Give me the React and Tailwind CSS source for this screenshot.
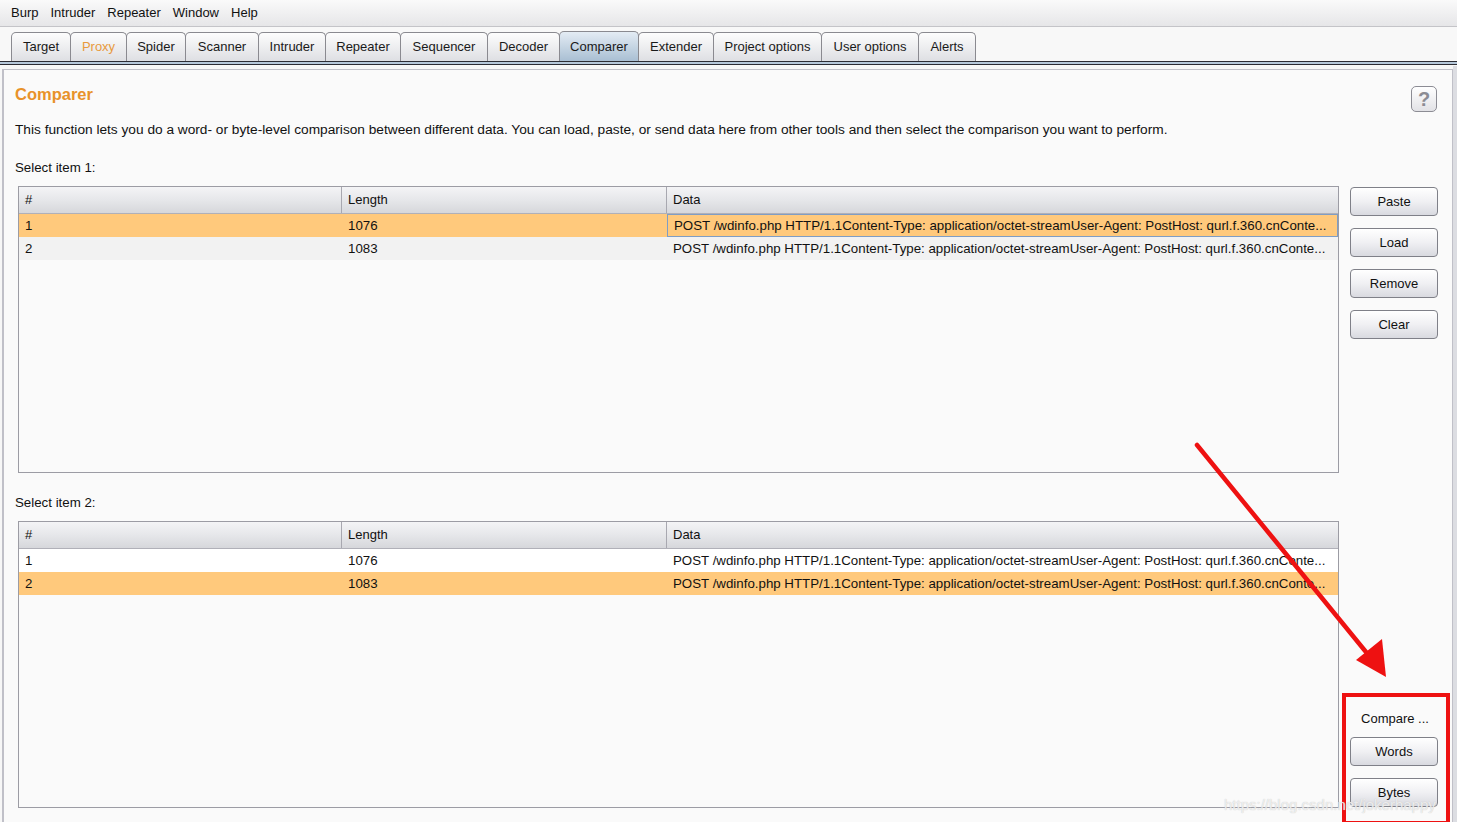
import React from 'react';

const menus = ['Burp', 'Intruder', 'Repeater', 'Window', 'Help'];

const tabs = [
  { name: 'Target', w: 'w-[60px]' },
  { name: 'Proxy', w: 'w-[57px]', orange: true },
  { name: 'Spider', w: 'w-[60px]' },
  { name: 'Scanner', w: 'w-[74px]' },
  { name: 'Intruder', w: 'w-[68px]' },
  { name: 'Repeater', w: 'w-[76px]' },
  { name: 'Sequencer', w: 'w-[88px]' },
  { name: 'Decoder', w: 'w-[73px]' },
  { name: 'Comparer', w: 'w-[80px]', active: true },
  { name: 'Extender', w: 'w-[76px]' },
  { name: 'Project options', w: 'w-[109px]' },
  { name: 'User options', w: 'w-[98px]' },
  { name: 'Alerts', w: 'w-[58px]' },
];

const DATA =
  'POST /wdinfo.php HTTP/1.1Content-Type: application/octet-streamUser-Agent: PostHost: qurl.f.360.cnConte...';

function Btn({ children }) {
  return (
    <button className="h-[29px] w-[88px] rounded-[4px] border border-[#7f8088] bg-gradient-to-b from-[#ffffff] via-[#f0f0f3] to-[#d9dae0] text-[13px] text-[#111] shadow-[inset_0_1px_0_#fff]">
      {children}
    </button>
  );
}

function Table({ selected }) {
  const rows = [
    { n: '1', len: '1076' },
    { n: '2', len: '1083' },
  ];
  return (
    <div className="flex-1 border border-[#9c9ca4] bg-[#fafafa] flex flex-col">
      <div className="flex h-[27px] bg-gradient-to-b from-[#f4f4f6] via-[#e6e7ea] to-[#d6d7db] border-b border-[#b0b0b8] text-[13px] text-[#111]">
        <div className="w-[323px] border-r border-[#a8a8b0] px-[6px] flex items-center">#</div>
        <div className="w-[325px] border-r border-[#a8a8b0] px-[6px] flex items-center">Length</div>
        <div className="flex-1 px-[6px] flex items-center">Data</div>
      </div>
      {rows.map((r, i) => {
        const sel = i === selected;
        const bg = sel ? 'bg-[#ffc97c]' : i === 1 ? 'bg-[#f2f2f2]' : 'bg-white';
        return (
          <div key={r.n} className={`flex h-[23px] text-[13.3px] text-[#111] ${bg}`}>
            <div className="w-[323px] px-[6px] flex items-center">{r.n}</div>
            <div className="w-[325px] px-[6px] flex items-center">{r.len}</div>
            <div
              className={`flex-1 px-[6px] flex items-center whitespace-nowrap overflow-hidden ${
                sel && selected === 0 ? 'border border-[#7f9dc4]' : ''
              }`}
            >
              {DATA}
            </div>
          </div>
        );
      })}
    </div>
  );
}

export default function App() {
  return (
    <div
      className="relative w-[1457px] h-[822px] overflow-hidden bg-[#f7f7f7] text-[#111]"
      style={{ fontFamily: '"Liberation Sans", Arial, sans-serif' }}
    >
      {/* menu bar */}
      <div className="h-[27px] flex items-center gap-[12px] pl-[11px] bg-gradient-to-b from-[#fafafa] to-[#e6e6e8] border-b border-[#c4c4c8] text-[13px]">
        {menus.map((m) => (
          <span key={m}>{m}</span>
        ))}
      </div>

      {/* tab strip */}
      <div className="pt-[4px] bg-[#f8f8f8]">
        <div className="flex pl-[11px] h-[30px] items-end">
          {tabs.map((t) => (
            <div
              key={t.name}
              className={`${t.w} h-[29px] -mr-px flex items-center justify-center rounded-t-[5px] border border-b-0 border-[#8a8a90] text-[13px] ${
                t.active
                  ? 'bg-gradient-to-b from-[#e4ecf4] to-[#a9bfd3] h-[30px]'
                  : 'bg-gradient-to-b from-[#fdfdfd] to-[#dedfe3]'
              } ${t.orange ? 'text-[#e89a3c]' : 'text-[#1a1a1a]'}`}
            >
              {t.name}
            </div>
          ))}
        </div>
        <div className="h-[4px] border-t border-b border-[#2c2c34] bg-[#b6c8da]" />
      </div>

      {/* main panel */}
      <div className="mt-[4px] ml-[2px] mr-[4px] h-[760px] border-l-2 border-t border-r border-[#c0c0c8] bg-[#fafafa] pl-[11px] pr-[14px]">
        <div className="flex items-start justify-between pt-[13px]">
          <div className="text-[16.5px] font-bold text-[#e8922a] leading-[22px]">Comparer</div>
          <div className="mt-[3px] mr-[1px] w-[26px] h-[26px] rounded-[5px] border border-[#8c8c94] bg-gradient-to-b from-white to-[#e2e2e6] flex items-center justify-center text-[20px] font-bold text-[#8c8c94] leading-none">
            ?
          </div>
        </div>
        <p className="mt-[10px] text-[13.7px] leading-[16px] whitespace-nowrap">
          This function lets you do a word- or byte-level comparison between different data. You can load, paste, or send data here from other tools and then select the comparison you want to perform.
        </p>

        <div className="mt-[22px] text-[13.3px] leading-[16px]">Select item 1:</div>
        <div className="mt-[10px] ml-[3px] flex gap-[11px] h-[287px]">
          <Table selected={0} />
          <div className="flex flex-col gap-[12px] pt-[1px]">
            <Btn>Paste</Btn>
            <Btn>Load</Btn>
            <Btn>Remove</Btn>
            <Btn>Clear</Btn>
          </div>
        </div>

        <div className="mt-[22px] text-[13.3px] leading-[16px]">Select item 2:</div>
        <div className="mt-[10px] ml-[3px] flex gap-[11px] h-[287px]">
          <Table selected={1} />
          <div className="flex flex-col justify-end gap-[12px] pb-[1px]">
            <div className="text-[13px] leading-[16px] text-center pl-[2px] mb-[-2px]">Compare ...</div>
            <Btn>Words</Btn>
            <Btn>Bytes</Btn>
          </div>
        </div>
      </div>

      {/* right window edge */}
      <div className="absolute right-0 top-[66px] w-[4px] h-[756px] bg-[#dcdde2]" />

      {/* annotation overlay: arrow */}
      <svg className="absolute left-0 top-0 pointer-events-none" width="1457" height="822">
        <line x1="1197" y1="445" x2="1366" y2="652" stroke="#ee1111" strokeWidth="4.5" strokeLinecap="round" />
        <polygon points="1386,677 1356,660 1382,639" fill="#ee1111" />
      </svg>

      {/* annotation overlay: red box */}
      <div className="absolute left-[1342px] top-[693px] w-[108px] h-[132px] border-[4px] border-[#ee1111]" />

      {/* watermark */}
      <div className="absolute left-[1224px] top-[794px] text-[15px] text-white/70 [text-shadow:0_0_1px_#bbb] pointer-events-none">
        https://blog.csdn.net/jokerhappy
      </div>
    </div>
  );
}
